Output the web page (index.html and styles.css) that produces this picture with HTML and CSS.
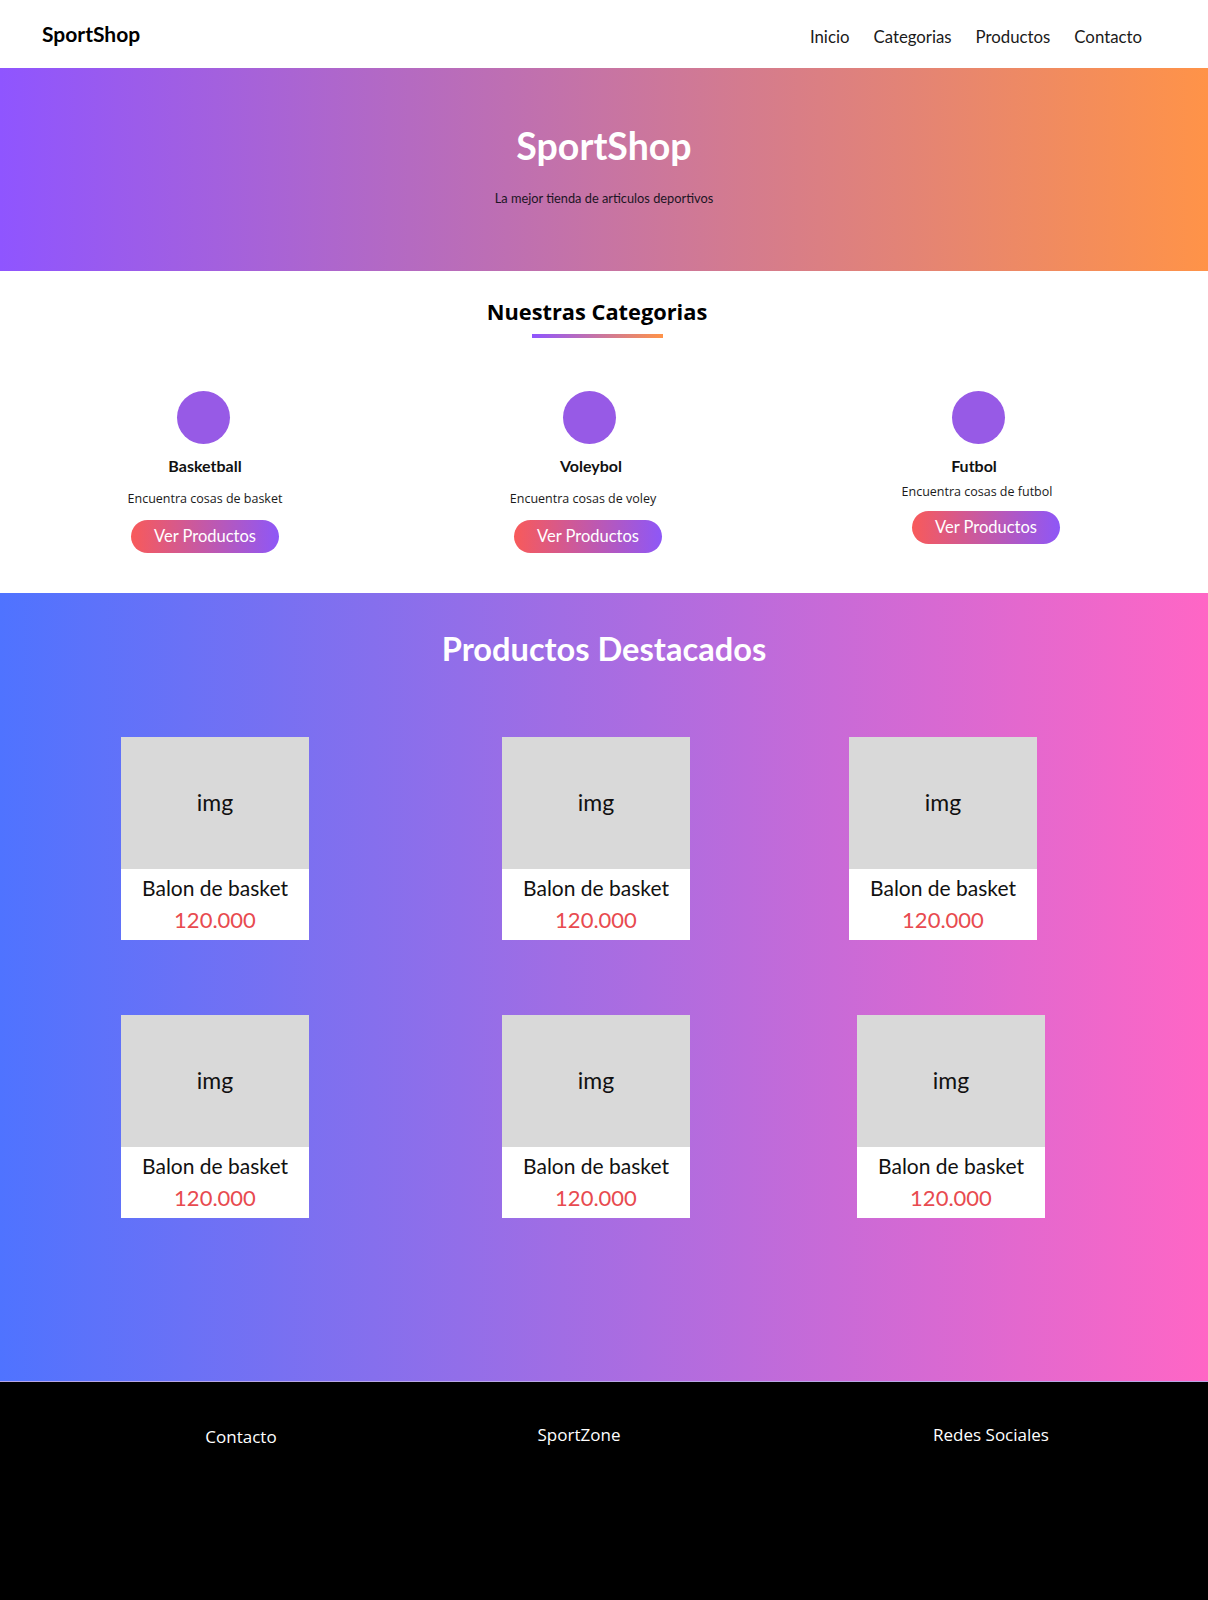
FILE: index.html
```html
<!DOCTYPE html>
<html lang="es">
<head>
<meta charset="utf-8">
<title>SportShop</title>
<link rel="stylesheet" href="styles.css">
</head>
<body>
<header class="topbar">
  <div class="logo">SportShop</div>
  <nav class="nav">
    <a href="#">Inicio</a>
    <a href="#">Categorias</a>
    <a href="#">Productos</a>
    <a href="#">Contacto</a>
  </nav>
</header>

<section class="hero">
  <h1 class="hero-title">SportShop</h1>
  <p class="hero-sub">La mejor tienda de articulos deportivos</p>
</section>

<section class="cats">
  <h2 class="cats-title">Nuestras Categorias</h2>
  <div class="cats-bar"></div>
  <div class="cats-grid">
    <div class="cat">
      <div class="cat-circle"></div>
      <h3 class="cat-name">Basketball</h3>
      <p class="cat-desc">Encuentra cosas de basket</p>
      <a class="btn" href="#">Ver Productos</a>
    </div>
    <div class="cat cat-mid">
      <div class="cat-circle"></div>
      <h3 class="cat-name">Voleybol</h3>
      <p class="cat-desc">Encuentra cosas de voley</p>
      <a class="btn" href="#">Ver Productos</a>
    </div>
    <div class="cat cat-last">
      <div class="cat-circle"></div>
      <h3 class="cat-name">Futbol</h3>
      <p class="cat-desc">Encuentra cosas de futbol</p>
      <a class="btn" href="#">Ver Productos</a>
    </div>
  </div>
</section>

<section class="products">
  <h2 class="products-title">Productos Destacados</h2>
  <div class="products-grid">
    <div class="card"><div class="card-img">img</div><div class="card-body"><p class="card-name">Balon de basket</p><p class="card-price">120.000</p></div></div>
    <div class="card"><div class="card-img">img</div><div class="card-body"><p class="card-name">Balon de basket</p><p class="card-price">120.000</p></div></div>
    <div class="card"><div class="card-img">img</div><div class="card-body"><p class="card-name">Balon de basket</p><p class="card-price">120.000</p></div></div>
    <div class="card"><div class="card-img">img</div><div class="card-body"><p class="card-name">Balon de basket</p><p class="card-price">120.000</p></div></div>
    <div class="card"><div class="card-img">img</div><div class="card-body"><p class="card-name">Balon de basket</p><p class="card-price">120.000</p></div></div>
    <div class="card card-shift"><div class="card-img">img</div><div class="card-body"><p class="card-name">Balon de basket</p><p class="card-price">120.000</p></div></div>
  </div>
</section>

<footer class="footer">
  <div class="foot-col foot-contact">Contacto</div>
  <div class="foot-col foot-brand">SportZone</div>
  <div class="foot-col foot-social">Redes Sociales</div>
</footer>
</body>
</html>
```

FILE: styles.css
```css
* { box-sizing: border-box; }

body {
  margin: 0;
  font-family: "Lato", "Open Sans", sans-serif;
  color: #111;
  background: #fff;
}

h1, h2, h3, p { margin: 0; }

/* Header */
.topbar {
  height: 68px;
  display: flex;
  align-items: center;
  justify-content: space-between;
  padding: 0 66px 0 42px;
}
.logo {
  font-weight: 700;
  font-size: 21px;
  color: #000;
  margin-top: -2px;
}
.nav {
  display: flex;
  gap: 24px;
  margin-top: 4px;
}
.nav a {
  color: #1a1a1a;
  text-decoration: none;
  font-size: 16.8px;
}

/* Hero */
.hero {
  height: 203px;
  background: linear-gradient(90deg, #8f55ff 0%, #ff9348 100%);
  display: flex;
  flex-direction: column;
  align-items: center;
  padding-top: 56px;
}
.hero-title {
  color: #fff;
  font-size: 37.5px;
  font-weight: 700;
  line-height: 44px;
}
.hero-sub {
  margin-top: 22px;
  font-size: 12.8px;
  color: #1c1524;
}

/* Categories */
.cats {
  height: 322px;
  display: flex;
  flex-direction: column;
  align-items: center;
  padding-top: 27px;
}
.cats-title {
  font-family: "Open Sans", sans-serif;
  font-weight: 700;
  font-size: 21.8px;
  line-height: 28px;
  color: #000;
  margin-right: 14px;
}
.cats-bar {
  width: 131px;
  height: 4px;
  margin-top: 8px;
  margin-right: 14px;
  background: linear-gradient(90deg, #8f55ff, #ff9348);
}
.cats-grid {
  align-self: flex-start;
  display: grid;
  grid-template-columns: repeat(3, 386px);
  padding-left: 12px;
  margin-top: 53px;
}
.cat {
  display: flex;
  flex-direction: column;
  align-items: center;
}
.cat-circle {
  width: 53px;
  height: 53px;
  border-radius: 50%;
  background: #975ae6;
  margin-left: -4px;
}
.cat-name {
  margin-top: 12px;
  font-size: 16px;
  font-weight: 700;
  line-height: 20px;
  color: #111;
}
.cat-desc {
  font-family: "Open Sans", sans-serif;
  margin-top: 14px;
  font-size: 12.5px;
  line-height: 18px;
  color: #1a1a1a;
}
.btn {
  margin-top: 12px;
  width: 148px;
  height: 33px;
  border-radius: 17px;
  background: linear-gradient(90deg, #f85a5a 0%, #8e57f7 100%);
  color: #fff;
  text-decoration: none;
  font-size: 16.5px;
  display: flex;
  align-items: center;
  justify-content: center;
  padding-bottom: 2px;
}
.cat-mid .cat-desc { margin-left: -16px; }
.cat-mid .btn { margin-left: -6px; }
.cat-last .cat-name { margin-left: -6px; }
.cat-last .cat-desc { margin-top: 7px; }
.cat-last .btn { margin-top: 10px; margin-left: 18px; }
.cat-last .cat-circle { margin-left: 2px; }

/* Products */
.products {
  height: 789px;
  background: linear-gradient(90deg, #4f73ff 0%, #ff66c5 100%);
  border-bottom: 1px solid #b7a6e6;
  padding-top: 38px;
}
.products-title {
  text-align: center;
  color: #fff;
  font-size: 32.6px;
  font-weight: 700;
  line-height: 36px;
}
.products-grid {
  display: grid;
  grid-template-columns: 381px 347px 196px;
  row-gap: 75px;
  padding-left: 121px;
  margin-top: 70px;
}
.card {
  width: 188px;
  height: 203px;
  background: #fff;
  display: flex;
  flex-direction: column;
}
.card-shift { margin-left: 8px; }
.card-img {
  height: 132px;
  background: #d9d9d9;
  display: flex;
  align-items: center;
  justify-content: center;
  font-size: 23px;
  color: #111;
  padding-bottom: 2px;
}
.card-body {
  flex: 1;
  text-align: center;
  padding-top: 5px;
}
.card-name {
  font-size: 21px;
  line-height: 28px;
  color: #111;
}
.card-price {
  font-size: 22px;
  line-height: 28px;
  color: #e84a4f;
  margin-top: 4px;
}

/* Footer */
.footer {
  height: 218px;
  background: #000;
  display: grid;
  grid-template-columns: 482px 194px 1fr;
  align-items: start;
  padding-top: 41px;
  font-family: "Open Sans", sans-serif;
  font-size: 17px;
  color: #fff;
}
.foot-col { text-align: center; white-space: nowrap; }
.foot-contact { padding-top: 2px; }
.foot-social { padding-left: 98px; }
```
